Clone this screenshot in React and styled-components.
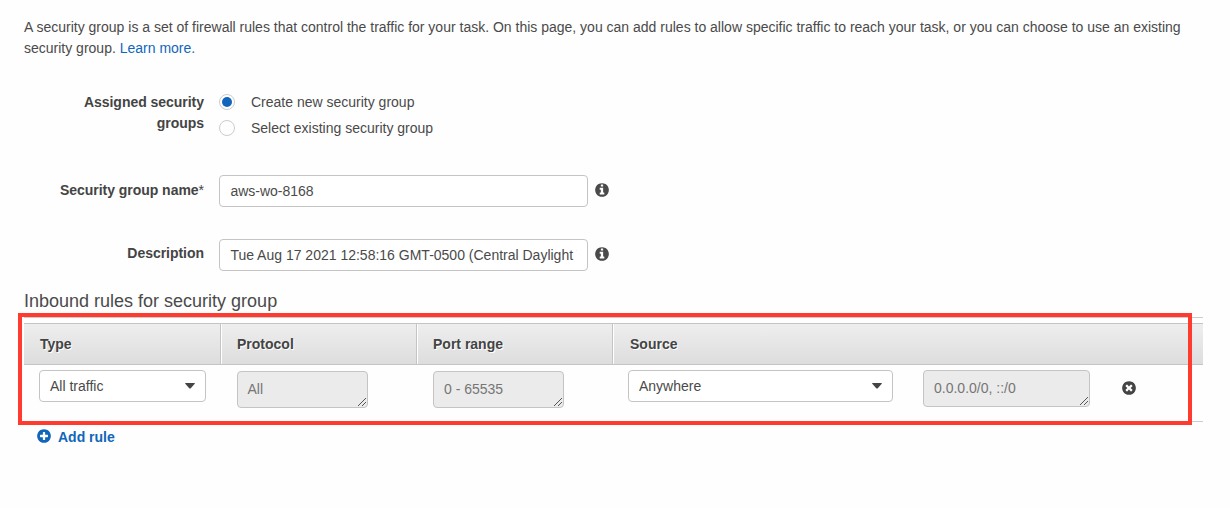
import React from "react";
import styled, { createGlobalStyle, css } from "styled-components";

const GlobalStyle = createGlobalStyle`
  *, *::before, *::after { box-sizing: border-box; }
  html { height: 100%; background: #fefefe; }
  body {
    margin: 0;
    color: #4a4a4a;
    font: 14px/21px "Liberation Sans", Arial, sans-serif;
    overflow: hidden;
  }
`;

const Page = styled.main`
  width: 1230px;
  height: 508px;
  padding: 17px 26px 0 24px;
`;

const Intro = styled.p`
  margin: 0;
`;

const Link = styled.a`
  color: #1166bb;
  text-decoration: none;
`;

const FormRow = styled.div`
  display: flex;
  align-items: flex-start;
  margin-top: ${(p) => p.$gap}px;
`;

const Label = styled.label`
  width: 180px;
  padding-left: 30px;
  padding-top: ${(p) => p.$drop || 0}px;
  margin-right: 15px;
  text-align: right;
  color: #444;
  font-weight: 700;
  letter-spacing: -0.03px;
`;

const Star = styled.span`
  font-weight: 400;
`;

const RadioGroup = styled.div`
  display: grid;
  gap: 5px;
`;

const RadioOption = styled.div`
  display: flex;
  align-items: flex-start;
  gap: 16px;
  height: 21px;
`;

const Radio = styled.span`
  display: grid;
  place-items: center;
  width: 16px;
  height: 16px;
  margin-top: 2px;
  border: 1px solid #ccc;
  border-radius: 50%;
  background: #fff;

  &::after {
    content: "";
    width: 10px;
    height: 10px;
    border-radius: 50%;
    background: ${(p) => (p.$checked ? "#1166bb" : "transparent")};
  }
`;

const fieldFrame = css`
  border: 1px solid #c4c4c4;
  border-radius: 4px;
  background: #fff;
`;

const TextField = styled.div`
  ${fieldFrame}
  width: 369px;
  height: 32px;
  padding: 5px 10px 4px 10.4px;
`;

const FieldValue = styled.div`
  overflow: hidden;
  white-space: nowrap;
`;

const InfoSlot = styled.span`
  display: flex;
  margin: 8px 0 0 7px;
`;

const Heading = styled.h3`
  margin: 20px 0 5px;
  font-size: 18px;
  line-height: 21px;
  font-weight: 400;
`;

const TableFrame = styled.section`
  position: relative;
  width: 1179px;
  height: 105px;
  padding-top: 5px;
  border: solid #ccc;
  border-width: 1px 0;
`;

const Highlight = styled.div`
  position: absolute;
  top: -5px;
  left: -6px;
  width: 1174px;
  height: 112px;
  border: 4px solid #ff3b30;
`;

const columns = css`
  display: grid;
  grid-template-columns: 197px 196px 196px 1fr;
`;

const HeaderRow = styled.div`
  ${columns}
  height: 42px;
  border: solid #c4c4c4;
  border-width: 1px 0;
  background: linear-gradient(#eee, #ddd);
`;

const HeaderCell = styled.div`
  padding: 10px 0 0 ${(p) => (p.$last ? 17 : 16)}px;
  color: #444;
  font-weight: 700;
  text-shadow: 1px 1px 0 #fff;
  border-right: ${(p) => (p.$last ? "none" : "1px solid #c4c4c4")};
  box-shadow: ${(p) => (p.$first ? "none" : "inset 1px 0 0 #fff")};
`;

const RuleRow = styled.div`
  ${columns}
  height: 56px;
  align-items: start;
`;

const RuleCell = styled.div`
  display: flex;
  align-items: flex-start;
  padding: ${(p) => p.$top}px 0 0 ${(p) => p.$left}px;
`;

const SelectBox = styled.div`
  ${fieldFrame}
  display: flex;
  align-items: center;
  justify-content: space-between;
  width: ${(p) => p.$w}px;
  height: 32px;
  padding: 0 10px 0 10px;
`;

const ReadOnlyBox = styled.div`
  ${fieldFrame}
  display: flex;
  justify-content: space-between;
  width: ${(p) => p.$w}px;
  height: 37px;
  padding: 7px 0 0 ${(p) => p.$inset || 10}px;
  margin-left: ${(p) => p.$ml || 0}px;
  background: #ebebeb;
  color: #767676;
`;

const Grip = styled.svg`
  align-self: flex-end;
  width: 10px;
  height: 10px;
`;

const RemoveButton = styled.button`
  display: flex;
  margin: 11px 0 0 32px;
  padding: 0;
  border: 0;
  background: none;
  color: #444;
`;

const AddRule = styled.button`
  display: flex;
  align-items: flex-start;
  gap: 7px;
  margin: 5px 0 0 13px;
  padding: 0;
  border: 0;
  background: none;
  color: #1166bb;
  font: inherit;
  font-weight: 700;
`;

const Icon = styled.svg`
  display: block;
  width: 14px;
  height: 14px;
  fill: currentColor;

  ${AddRule} & {
    margin-top: 2px;
  }
`;

const DISC =
  "q0 209-103 385.5t-279.5 279.5-385.5 103-385.5-103-279.5-279.5-103-385.5 103-385.5 279.5-279.5 385.5-103 385.5 103 279.5 279.5 103 385.5z";

const GLYPHS = {
  info:
    "M1152 1376v-160q0-14-9-23t-23-9h-96v-512q0-14-9-23t-23-9h-320q-14 0-23 9t-9 23v160q0 14 9 23t23 9h96v320h-96q-14 0-23 9t-9 23v160q0 14 9 23t23 9h448q14 0 23-9t9-23zm-128-896v-160q0-14-9-23t-23-9h-192q-14 0-23 9t-9 23v160q0 14 9 23t23 9h192q14 0 23-9t9-23zm640 416" +
    DISC,
  plus:
    "M1344 960v-128q0-26-19-45t-45-19h-256v-256q0-26-19-45t-45-19h-128q-26 0-45 19t-19 45v256h-256q-26 0-45 19t-19 45v128q0 26 19 45t45 19h256v256q0 26 19 45t45 19h128q26 0 45-19t19-45v-256h256q26 0 45-19t19-45zm320-64" +
    DISC,
  times:
    "M1277 1122q0-26-19-45l-181-181 181-181q19-19 19-45 0-27-19-46l-90-90q-19-19-46-19-26 0-45 19l-181 181-181-181q-19-19-45-19-27 0-46 19l-90 90q-19 19-19 46 0 26 19 45l181 181-181 181q-19 19-19 45 0 27 19 46l90 90q19 19 46 19 26 0 45-19l181-181 181 181q19 19 45 19 27 0 46-19l90-90q19-19 19-46zm387-226" +
    DISC,
};

const Glyph = ({ name }) => (
  <Icon viewBox="112 112 1568 1568" aria-hidden="true">
    <path d={GLYPHS[name]} />
  </Icon>
);

const Caret = () => (
  <svg width="10" height="6" viewBox="0 0 10 6" aria-hidden="true">
    <path d="M0.6 0h8.8q.9 0 .3.8L5.8 5.2q-.8.8-1.6 0L.3.8Q-.3 0 .6 0z" fill="#444" />
  </svg>
);

const Select = ({ width, children }) => (
  <SelectBox $w={width}>
    <span>{children}</span>
    <Caret />
  </SelectBox>
);

const ReadOnly = ({ width, ml, inset, children }) => (
  <ReadOnlyBox $w={width} $ml={ml} $inset={inset}>
    <span>{children}</span>
    <Grip viewBox="0 0 10 10" aria-hidden="true">
      <path d="M1 9L9 1M5 9L9 5" stroke="#555" strokeWidth="1" fill="none" />
    </Grip>
  </ReadOnlyBox>
);

const Field = ({ gap, label, drop, required, value }) => (
  <FormRow $gap={gap}>
    <Label $drop={drop}>
      {label}
      {required && <Star>*</Star>}
    </Label>
    <TextField>
      <FieldValue>{value}</FieldValue>
    </TextField>
    <InfoSlot>
      <Glyph name="info" />
    </InfoSlot>
  </FormRow>
);

export default function App() {
  return (
    <>
      <GlobalStyle />
      <Page>
        <Intro>
          A security group is a set of firewall rules that control the traffic for your task. On this page, you can add
          rules to allow specific traffic to reach your task, or you can choose to use an existing security group.{" "}
          <Link>Learn more.</Link>
        </Intro>

        <FormRow $gap={33}>
          <Label>Assigned security groups</Label>
          <RadioGroup>
            <RadioOption>
              <Radio $checked />
              <span>Create new security group</span>
            </RadioOption>
            <RadioOption>
              <Radio />
              <span>Select existing security group</span>
            </RadioOption>
          </RadioGroup>
        </FormRow>
        <Field gap={36} drop={5} label="Security group name" required value="aws-wo-8168" />
        <Field gap={32} drop={4} label="Description" value="Tue Aug 17 2021 12:58:16 GMT-0500 (Central Daylight Time)" />

        <Heading>Inbound rules for security group</Heading>
        <TableFrame>
          <HeaderRow>
            <HeaderCell $first>Type</HeaderCell>
            <HeaderCell>Protocol</HeaderCell>
            <HeaderCell>Port range</HeaderCell>
            <HeaderCell $last>Source</HeaderCell>
          </HeaderRow>
          <RuleRow>
            <RuleCell $top={5} $left={15}>
              <Select width={167}>All traffic</Select>
            </RuleCell>
            <RuleCell $top={6} $left={16}>
              <ReadOnly width={131} inset={9.5}>
                All
              </ReadOnly>
            </RuleCell>
            <RuleCell $top={6} $left={16}>
              <ReadOnly width={131}>0 - 65535</ReadOnly>
            </RuleCell>
            <RuleCell $top={5} $left={15}>
              <Select width={265}>Anywhere</Select>
              <ReadOnly width={167} ml={30}>
                0.0.0.0/0, ::/0
              </ReadOnly>
              <RemoveButton aria-label="Remove rule">
                <Glyph name="times" />
              </RemoveButton>
            </RuleCell>
          </RuleRow>
          <Highlight />
        </TableFrame>
        <AddRule>
          <Glyph name="plus" />
          Add rule
        </AddRule>
      </Page>
    </>
  );
}
